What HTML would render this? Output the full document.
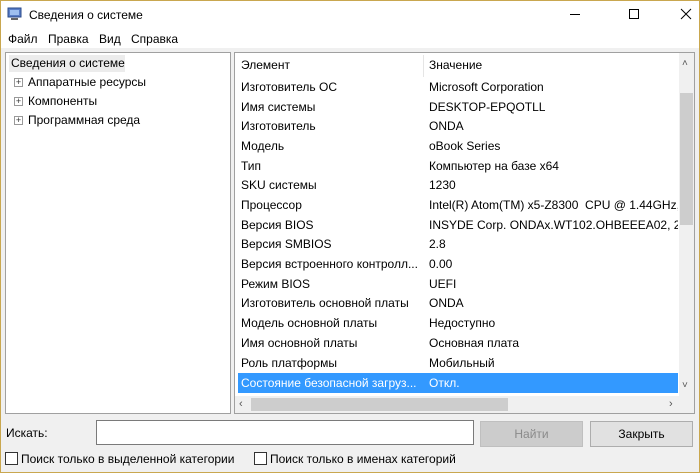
<!DOCTYPE html>
<html><head><meta charset="utf-8"><style>
*{box-sizing:border-box;margin:0;padding:0}
body{width:700px;height:473px;overflow:hidden;background:#f0f0f0;font-family:"Liberation Sans","DejaVu Sans",sans-serif;font-size:12px;color:#000;position:relative}
.a{position:absolute}
.frame{left:0;top:0;width:700px;height:473px;border:1px solid #c9a74f;pointer-events:none;z-index:9}
.row{position:absolute;left:241px;height:20px;line-height:20px;white-space:nowrap}
.v{position:absolute;left:429px;width:249px;overflow:hidden;height:20px;line-height:20px;white-space:nowrap}
.tree div{position:absolute;left:14px;white-space:nowrap}
.plus{position:absolute;left:0;top:3px;width:9px;height:9px;border:1px solid #999;background:#fff;font-size:9px;line-height:7px;text-align:center;color:#333}
</style></head><body>
<div class="a" style="left:0;top:0;width:700px;height:48px;background:#fff"></div>
<svg class="a" style="left:7px;top:7px" width="16" height="14"><rect x="1" y="1" width="13" height="9" fill="#5b7fc7" stroke="#2a4a8a"/><rect x="3" y="3" width="9" height="5" fill="#9fc0f0"/><rect x="4" y="11" width="7" height="2" fill="#666"/></svg>
<div class="a" style="left:29px;top:8px;font-size:12px">Сведения о системе</div>
<div class="a" style="left:570px;top:14px;width:10px;height:1px;background:#000"></div>
<div class="a" style="left:629px;top:9px;width:10px;height:10px;border:1px solid #000"></div>
<svg class="a" style="left:680px;top:8px" width="12" height="12"><path d="M1 1L11 11M11 1L1 11" stroke="#000" stroke-width="1"/></svg>
<div class="a" style="left:8px;top:32px">Файл</div>
<div class="a" style="left:48px;top:32px">Правка</div>
<div class="a" style="left:99px;top:32px">Вид</div>
<div class="a" style="left:131px;top:32px">Справка</div>

<div class="a" style="left:5px;top:52px;width:226px;height:362px;background:#fff;border:1px solid #a0a0a0"></div>
<div class="a" style="left:9px;top:55px;width:116px;height:17px;background:#ececec"></div>
<div class="a" style="left:11px;top:56px">Сведения о системе</div>
<div class="tree">
<div style="top:75px"><span class="plus">+</span><span style="margin-left:14px">Аппаратные ресурсы</span></div>
<div style="top:94px"><span class="plus">+</span><span style="margin-left:14px">Компоненты</span></div>
<div style="top:113px"><span class="plus">+</span><span style="margin-left:14px">Программная среда</span></div>
</div>

<div class="a" style="left:234px;top:52px;width:461px;height:362px;background:#fff;border:1px solid #a0a0a0"></div>
<div class="a" style="left:423px;top:55px;width:1px;height:22px;background:#e5e5e5"></div>
<div class="a" style="left:241px;top:58px">Элемент</div>
<div class="a" style="left:429px;top:58px">Значение</div>
<div class="a" style="left:238px;top:373px;width:440px;height:20px;background:#3399ff"></div>
<div class="a" style="left:679px;top:53px;width:15px;height:343px;background:#f0f0f0"></div>
<div class="a" style="left:680px;top:93px;width:13px;height:132px;background:#cdcdcd"></div>
<div class="a" style="left:682px;top:58px;font-size:10px;color:#555">˄</div>
<div class="a" style="left:682px;top:380px;font-size:10px;color:#555">˅</div>
<div class="a" style="left:235px;top:396px;width:459px;height:17px;background:#f0f0f0"></div>
<div class="a" style="left:251px;top:398px;width:257px;height:13px;background:#cdcdcd"></div>
<div class="a" style="left:239px;top:398px;font-size:11px;color:#555">‹</div>
<div class="a" style="left:669px;top:398px;font-size:11px;color:#555">›</div>

<div class="row" style="top:77px">Изготовитель ОС</div><div class="v" style="top:77px">Microsoft Corporation</div>
<div class="row" style="top:97px">Имя системы</div><div class="v" style="top:97px">DESKTOP-EPQOTLL</div>
<div class="row" style="top:116px">Изготовитель</div><div class="v" style="top:116px">ONDA</div>
<div class="row" style="top:136px">Модель</div><div class="v" style="top:136px">oBook Series</div>
<div class="row" style="top:156px">Тип</div><div class="v" style="top:156px">Компьютер на базе x64</div>
<div class="row" style="top:175px">SKU системы</div><div class="v" style="top:175px">1230</div>
<div class="row" style="top:195px">Процессор</div><div class="v" style="top:195px">Intel(R) Atom(TM) x5-Z8300&nbsp; CPU @ 1.44GHz,</div>
<div class="row" style="top:215px">Версия BIOS</div><div class="v" style="top:215px">INSYDE Corp. ONDAx.WT102.OHBEEEA02, 23.</div>
<div class="row" style="top:234px">Версия SMBIOS</div><div class="v" style="top:234px">2.8</div>
<div class="row" style="top:254px">Версия встроенного контролл...</div><div class="v" style="top:254px">0.00</div>
<div class="row" style="top:274px">Режим BIOS</div><div class="v" style="top:274px">UEFI</div>
<div class="row" style="top:293px">Изготовитель основной платы</div><div class="v" style="top:293px">ONDA</div>
<div class="row" style="top:313px">Модель основной платы</div><div class="v" style="top:313px">Недоступно</div>
<div class="row" style="top:333px">Имя основной платы</div><div class="v" style="top:333px">Основная плата</div>
<div class="row" style="top:353px">Роль платформы</div><div class="v" style="top:353px">Мобильный</div>
<div class="row" style="top:373px;color:#fff">Состояние безопасной загруз...</div><div class="v" style="top:373px;color:#fff">Откл.</div>

<div class="a" style="left:6px;top:426px">Искать:</div>
<div class="a" style="left:96px;top:420px;width:378px;height:25px;background:#fff;border:1px solid #7a7a7a"></div>
<div class="a" style="left:480px;top:421px;width:103px;height:26px;background:#cccccc;border:1px solid #bfbfbf;color:#8a8a8a;text-align:center;line-height:24px">Найти</div>
<div class="a" style="left:590px;top:421px;width:103px;height:26px;background:#e1e1e1;border:1px solid #adadad;text-align:center;line-height:24px">Закрыть</div>
<div class="a" style="left:5px;top:452px;width:13px;height:13px;background:#fff;border:1px solid #333"></div>
<div class="a" style="left:21px;top:452px">Поиск только в выделенной категории</div>
<div class="a" style="left:254px;top:452px;width:13px;height:13px;background:#fff;border:1px solid #333"></div>
<div class="a" style="left:270px;top:452px">Поиск только в именах категорий</div>
<div class="a frame"></div>
</body></html>
